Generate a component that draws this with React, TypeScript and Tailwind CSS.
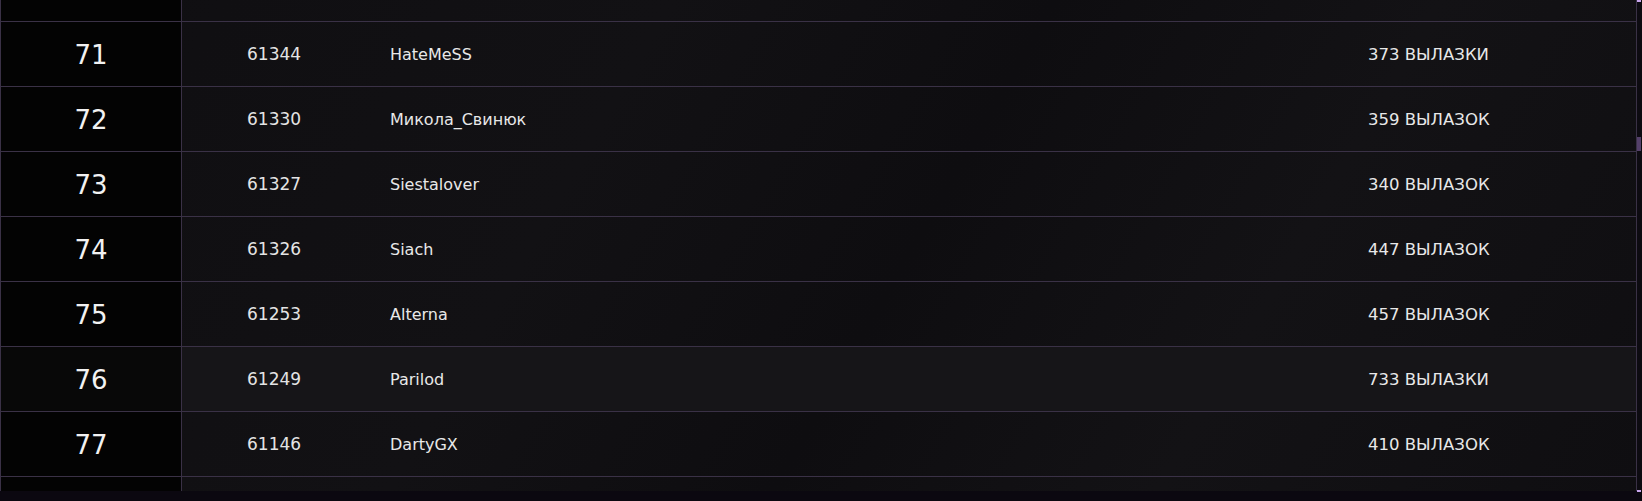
import React from "react";

const rows = [
  { rank: "", id: "", name: "", stat: "" },
  { rank: "71", id: "61344", name: "HateMeSS", stat: "373 ВЫЛАЗКИ" },
  { rank: "72", id: "61330", name: "Микола_Свинюк", stat: "359 ВЫЛАЗОК" },
  { rank: "73", id: "61327", name: "Siestalover", stat: "340 ВЫЛАЗОК" },
  { rank: "74", id: "61326", name: "Siach", stat: "447 ВЫЛАЗОК" },
  { rank: "75", id: "61253", name: "Alterna", stat: "457 ВЫЛАЗОК" },
  { rank: "76", id: "61249", name: "Parilod", stat: "733 ВЫЛАЗКИ", hover: true },
  { rank: "77", id: "61146", name: "DartyGX", stat: "410 ВЫЛАЗОК" },
  { rank: "", id: "", name: "", stat: "" },
];

export default function App() {
  return (
    <div
      className="flex h-[501px] w-full overflow-hidden bg-[#0b0810]"
      style={{ fontFamily: '"DejaVu Sans", "Liberation Sans", sans-serif' }}
    >
      <div className="flex h-[491px] w-[1637px] shrink-0 flex-col overflow-hidden border-x border-[#3a3146] bg-[linear-gradient(120deg,#0f0e11_0%,#121114_35%,#0e0d10_55%,#131215_75%,#0f0e11_100%)]">
        <div className="mt-[-43px] flex flex-col">
          {rows.map((r, i) => (
            <div
              key={i}
              className={`flex h-[65px] shrink-0 items-center border-b border-[#3a3146] ${
                r.hover ? "bg-[#161518]" : ""
              }`}
            >
              <div
                className={`flex h-full w-[181px] shrink-0 items-center justify-center border-r border-[#3a3146] pt-[2px] text-[26px] text-[#f2f2f2] ${
                  r.hover ? "bg-[#080808]" : "bg-[#030303]"
                }`}
              >
                {r.rank}
              </div>
              <div className="w-[208px] shrink-0 pl-[65px] pt-[2px] text-[17px] text-[#e4e4e4]">
                {r.id}
              </div>
              <div className="flex-1 pt-[2px] text-[16px] text-[#e8e8e8]">{r.name}</div>
              <div className="w-[268px] shrink-0 pt-[2px] text-[16.5px] text-[#e8e8e8]">
                {r.stat}
              </div>
            </div>
          ))}
        </div>
      </div>
      <div className="h-[492px] w-[5px] shrink-0 bg-[#0d0b11]">
        <div className="h-[2px] w-[4px] bg-[#c9a5ee]" />
        <div className="mt-[135px] h-[14px] w-[4px] bg-[#54406a]" />
        <div className="mt-[339px] h-[2px] w-[4px] bg-[#c9a5ee]" />
      </div>
    </div>
  );
}
